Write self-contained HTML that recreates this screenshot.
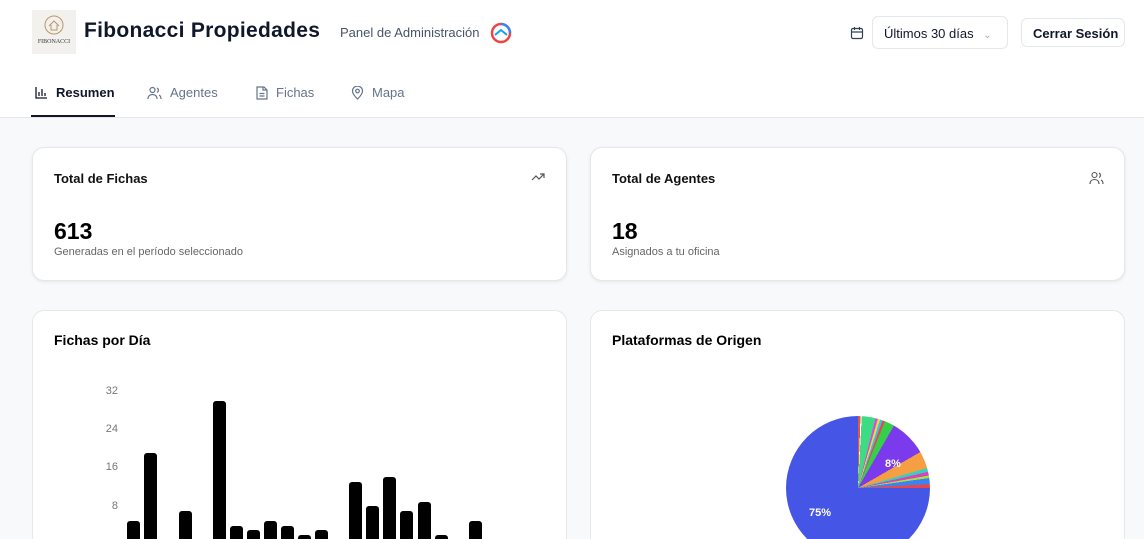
<!DOCTYPE html>
<html><head><meta charset="utf-8"><style>
*{box-sizing:border-box;margin:0;padding:0}
html,body{width:1144px;height:539px;overflow:hidden}
body{background:#f8f9fa;font-family:"Liberation Sans",sans-serif;color:#0f172a;position:relative}
.hdr{position:absolute;left:0;top:0;width:1144px;height:118px;background:#fff;border-bottom:1px solid #e5e7eb}
.abs{position:absolute;white-space:nowrap}
.card{position:absolute;background:#fff;border:1px solid #e5e7eb;border-radius:12px;box-shadow:0 1px 3px rgba(0,0,0,.08)}
.card2{position:absolute;background:#fff;border:1px solid #e5e7eb;border-bottom:none;border-radius:12px 12px 0 0;top:310px;height:229px}
.t{font-size:13px;font-weight:bold;color:#111}
.tab{position:absolute;top:85px;font-size:13px;color:#64748b;display:flex;align-items:center;gap:8px;white-space:nowrap}
.bar{position:absolute;width:13px;background:#000;border-radius:3px 3px 0 0;bottom:0}
.yl{position:absolute;font-size:11px;color:#777;width:20px;text-align:right;left:98px}
</style></head><body>
<div class="hdr">
 <div class="abs" style="left:32px;top:10px;width:44px;height:44px;background:#f3f1ee;text-align:center">
  <svg width="22" height="22" viewBox="0 0 22 22" style="margin-top:4px"><circle cx="11" cy="11" r="9" fill="none" stroke="#b8966a" stroke-width="1"/><path d="M6 12l5-5 5 5M8 11v5h6v-5" fill="none" stroke="#b8966a" stroke-width="1"/></svg>
  <div style="font-family:'Liberation Serif',serif;font-size:6px;color:#333;margin-top:-2px">FIBONACCI</div>
 </div>
 <div class="abs" style="left:84px;top:19px;font-size:21px;font-weight:bold;color:#0f172a;letter-spacing:0.3px">Fibonacci Propiedades</div>
 <div class="abs" style="left:340px;top:25px;font-size:13px;color:#475569">Panel de Administración</div>
 <svg class="abs" style="left:490px;top:22px" width="22" height="22" viewBox="0 0 22 22"><circle cx="11" cy="11" r="9" fill="none" stroke="#ef4444" stroke-width="2.5"/><path d="M11 2a9 9 0 0 1 9 9" fill="none" stroke="#3b82f6" stroke-width="2.5"/><path d="M5 13l6-5 6 5" fill="none" stroke="#0ea5e9" stroke-width="2"/></svg>
 <svg class="abs" style="left:850px;top:26px" width="14" height="14" viewBox="0 0 14 14" fill="none" stroke="#334155" stroke-width="1.2"><rect x="1.5" y="2.5" width="11" height="10" rx="1.5"/><path d="M1.5 6h11M4.5 1v3M9.5 1v3"/></svg>
 <div class="abs" style="left:872px;top:16px;width:136px;height:33px;border:1px solid #e5e7eb;border-radius:6px;font-size:13px;padding:9px 0 0 11px;color:#0f172a">Últimos 30 días <span style="color:#aaa;font-size:10px;margin-left:6px">&#8964;</span></div>
 <div class="abs" style="left:1021px;top:18px;width:104px;height:29px;border:1px solid #e5e7eb;border-radius:6px;font-size:13px;font-weight:bold;padding:7px 0 0 11px">Cerrar Sesión</div>
 <div class="tab" style="left:35px;color:#0f172a;font-weight:bold"><svg width="13" height="13" viewBox="0 0 13 13" fill="none" stroke="#0f172a" stroke-width="1.3"><path d="M1 1v11h11M4 10V6M7 10V3M10 10V7"/></svg>Resumen</div>
 <div class="abs" style="left:31px;top:115px;width:84px;height:2px;background:#0f172a"></div>
 <div class="tab" style="left:147px"><svg width="15" height="14" viewBox="0 0 15 14" fill="none" stroke="#64748b" stroke-width="1.2"><circle cx="5.5" cy="4" r="2.5"/><path d="M1 13c0-3 2-4.5 4.5-4.5S10 10 10 13M10 2a2.5 2.5 0 0 1 0 4.5M12 9c1.5.7 2 2 2 4"/></svg>Agentes</div>
 <div class="tab" style="left:256px"><svg width="12" height="14" viewBox="0 0 12 14" fill="none" stroke="#64748b" stroke-width="1.2"><path d="M1 1h7l3 3v9H1zM7 1v3h4M3.5 7.5h5M3.5 10h5"/></svg>Fichas</div>
 <div class="tab" style="left:351px"><svg width="13" height="14" viewBox="0 0 13 14" fill="none" stroke="#64748b" stroke-width="1.2"><path d="M6.5 13s5-4.5 5-8a5 5 0 0 0-10 0c0 3.5 5 8 5 8z"/><circle cx="6.5" cy="5" r="1.8"/></svg>Mapa</div>
</div>

<div class="card" style="left:32px;top:147px;width:535px;height:134px">
 <div class="abs t" style="left:21px;top:23px">Total de Fichas</div>
 <svg class="abs" style="left:498px;top:24px" width="14" height="10" viewBox="0 0 14 10" fill="none" stroke="#555" stroke-width="1.2"><path d="M1 8l4-4 3 3 5-5M9 2h4v4"/></svg>
 <div class="abs" style="left:21px;top:70px;font-size:23px;font-weight:bold;color:#000">613</div>
 <div class="abs" style="left:21px;top:98px;font-size:11px;color:#666">Generadas en el período seleccionado</div>
</div>
<div class="card" style="left:590px;top:147px;width:535px;height:134px">
 <div class="abs t" style="left:21px;top:23px">Total de Agentes</div>
 <svg class="abs" style="left:498px;top:23px" width="15" height="14" viewBox="0 0 15 14" fill="none" stroke="#555" stroke-width="1.1"><circle cx="5.5" cy="4" r="2.5"/><path d="M1 13c0-3 2-4.5 4.5-4.5S10 10 10 13M10 2a2.5 2.5 0 0 1 0 4.5M12 9c1.5.7 2 2 2 4"/></svg>
 <div class="abs" style="left:21px;top:70px;font-size:23px;font-weight:bold;color:#000">18</div>
 <div class="abs" style="left:21px;top:98px;font-size:11px;color:#666">Asignados a tu oficina</div>
</div>

<div class="card2" style="left:32px;width:535px">
 <div class="abs" style="left:21px;top:21px;font-size:14px;font-weight:bold;color:#000">Fichas por Día</div>
</div>
<div class="card2" style="left:590px;width:535px;overflow:hidden">
 <div class="abs" style="left:21px;top:21px;font-size:14px;font-weight:bold;color:#000">Plataformas de Origen</div>
 <div class="abs" style="left:195px;top:105px;width:144px;height:144px;border-radius:50%;background:conic-gradient(#e8553e 0 2deg,#fff 2deg 3deg,#3ddc84 3deg 14deg,#d946ef 14deg 16deg,#e5e02a 16deg 18deg,#38bdf8 18deg 20deg,#ef4444 20deg 22deg,#35d04a 22deg 30deg,#7c3aed 30deg 60deg,#f59e42 60deg 74deg,#2dd4bf 74deg 77deg,#e040c0 77deg 80deg,#a3e635 80deg 82deg,#3b82f6 82deg 87deg,#ef4444 87deg 90deg,#4555e6 90deg 360deg)"></div>
 <div class="abs" style="left:294px;top:147px;font-size:11px;font-weight:bold;color:#fff">8%</div>
 <div class="abs" style="left:218px;top:196px;font-size:11px;font-weight:bold;color:#fff">75%</div>
</div>

<div class="yl" style="top:385px">32</div>
<div class="yl" style="top:423px">24</div>
<div class="yl" style="top:461px">16</div>
<div class="yl" style="top:500px">8</div>
<div class="bar" style="left:127px;height:18px"></div>
<div class="bar" style="left:144px;height:86px"></div>
<div class="bar" style="left:179px;height:28px"></div>
<div class="bar" style="left:213px;height:138px"></div>
<div class="bar" style="left:230px;height:13px"></div>
<div class="bar" style="left:247px;height:9px"></div>
<div class="bar" style="left:264px;height:18px"></div>
<div class="bar" style="left:281px;height:13px"></div>
<div class="bar" style="left:298px;height:4px"></div>
<div class="bar" style="left:315px;height:9px"></div>
<div class="bar" style="left:349px;height:57px"></div>
<div class="bar" style="left:366px;height:33px"></div>
<div class="bar" style="left:383px;height:62px"></div>
<div class="bar" style="left:400px;height:28px"></div>
<div class="bar" style="left:418px;height:37px"></div>
<div class="bar" style="left:435px;height:4px"></div>
<div class="bar" style="left:469px;height:18px"></div>
</body></html>
